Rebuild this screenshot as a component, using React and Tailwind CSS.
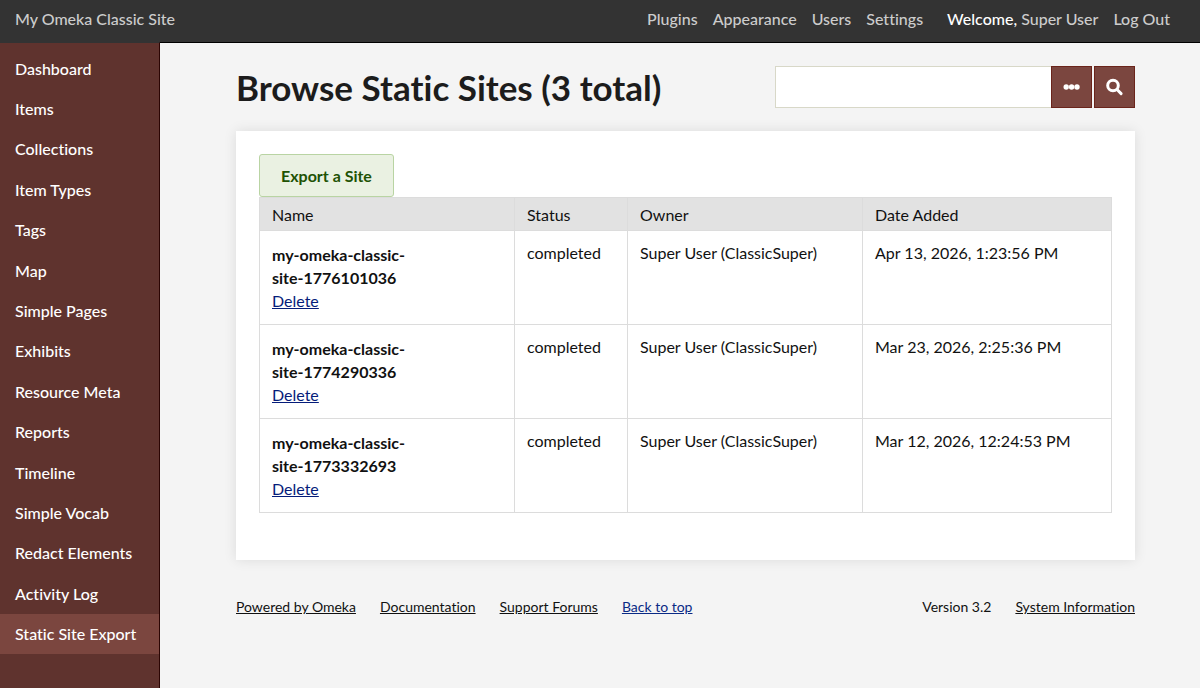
import { useState } from "react";

const adminLinks = ["Plugins", "Appearance", "Users", "Settings"];

const navLinks = [
  "Dashboard",
  "Items",
  "Collections",
  "Item Types",
  "Tags",
  "Map",
  "Simple Pages",
  "Exhibits",
  "Resource Meta",
  "Reports",
  "Timeline",
  "Simple Vocab",
  "Redact Elements",
  "Activity Log",
  "Static Site Export",
];

const sites = [
  { id: "1776101036", status: "completed", owner: "Super User (ClassicSuper)", added: "Apr 13, 2026, 1:23:56 PM" },
  { id: "1774290336", status: "completed", owner: "Super User (ClassicSuper)", added: "Mar 23, 2026, 2:25:36 PM" },
  { id: "1773332693", status: "completed", owner: "Super User (ClassicSuper)", added: "Mar 12, 2026, 12:24:53 PM" },
];

function Header() {
  return (
    <header className="flex items-center justify-between bg-[#333333] h-[42px] pl-[15px] pr-[30px] pb-[6px] text-[#cccccc] font-medium">
      <a href="#">My Omeka Classic Site</a>
      <div className="flex gap-6">
        <nav className="flex gap-[15px]">
          {adminLinks.map((link) => (
            <a key={link} href="#">{link}</a>
          ))}
        </nav>
        <div className="flex gap-[15px]">
          <span>
            <span className="text-white">Welcome,</span> <a href="#">Super User</a>
          </span>
          <a href="#">Log Out</a>
        </div>
      </div>
    </header>
  );
}

function Sidebar({ current }) {
  return (
    <nav className="w-40 shrink-0 bg-[#5f332e] border-t border-t-[#333333] border-r border-r-[#2b0503] pt-[5px] pb-[34px] text-white font-medium">
      <ul className="grid auto-rows-fr h-[606px]">
        {navLinks.map((link) => (
          <li key={link} className={link === current ? "bg-[#7b463f]" : ""}>
            <a href="#" className="flex items-center h-full pl-[15px]">{link}</a>
          </li>
        ))}
      </ul>
    </nav>
  );
}

function SearchForm() {
  const [query, setQuery] = useState("");

  return (
    <form className="flex w-[360px] h-[42px]" role="search" onSubmit={(e) => e.preventDefault()}>
      <input
        type="text"
        aria-label="Search"
        value={query}
        onChange={(e) => setQuery(e.target.value)}
        className="flex-1 min-w-0 bg-white border border-r-0 border-[#d8d8c8] px-3 outline-none"
      />
      <button type="button" aria-label="Advanced search" className="w-[41px] flex items-center justify-center bg-[#7b463f] border border-[#6b241b] text-white">
        <svg viewBox="0 0 18 6" className="w-[18px] h-[6px]" fill="currentColor">
          <circle cx="3.2" cy="3" r="2.7" />
          <circle cx="8.6" cy="3" r="2.7" />
          <circle cx="14" cy="3" r="2.7" />
        </svg>
      </button>
      <button type="submit" aria-label="Submit search" className="w-[41px] ml-[2px] flex items-center justify-center bg-[#7b463f] border border-[#6b241b] text-white">
        <svg viewBox="0 0 18 18" className="w-[18px] h-[18px]" fill="none" stroke="currentColor" strokeWidth="3" strokeLinecap="round">
          <circle cx="7" cy="7.5" r="5.3" />
          <path d="M11.3 11.8 15.1 15.6" />
        </svg>
      </button>
    </form>
  );
}

function SitesTable() {
  return (
    <table className="w-full table-fixed border-collapse text-left">
      <thead>
        <tr className="bg-[#e2e2e2]">
          <th className="w-[255px] border border-[#dcdcdc] px-3 h-[33px] font-normal">Name</th>
          <th className="w-[113px] border border-[#dcdcdc] px-3 font-normal">Status</th>
          <th className="w-[235px] border border-[#dcdcdc] px-3 font-normal">Owner</th>
          <th className="border border-[#dcdcdc] px-3 font-normal">Date Added</th>
        </tr>
      </thead>
      <tbody>
        {sites.map((site) => (
          <tr key={site.id} className="align-top">
            <td className="border border-[#dcdcdc] px-3 pt-3 pb-[11px]">
              <div className="font-bold">
                my-omeka-classic-
                <br />
                site-{site.id}
              </div>
              <a href="#" className="block leading-6 text-[#051c7a] underline">Delete</a>
            </td>
            <td className="border border-[#dcdcdc] px-3 pt-[10px]">{site.status}</td>
            <td className="border border-[#dcdcdc] px-3 pt-[10px]">{site.owner}</td>
            <td className="border border-[#dcdcdc] px-3 pt-[10px]">{site.added}</td>
          </tr>
        ))}
      </tbody>
    </table>
  );
}

function Footer() {
  return (
    <footer className="flex justify-between mt-[35px] text-sm leading-[23px]">
      <div className="flex gap-6">
        <a href="#" className="underline">Powered by Omeka</a>
        <a href="#" className="underline">Documentation</a>
        <a href="#" className="underline">Support Forums</a>
        <a href="#" className="underline text-[#0a2a85]">Back to top</a>
      </div>
      <div className="flex gap-6">
        <span>Version 3.2</span>
        <a href="#" className="underline">System Information</a>
      </div>
    </footer>
  );
}

export default function App() {
  return (
    <div className="min-h-screen flex flex-col bg-[#f4f4f4] text-[#111111] font-['Lato',sans-serif] text-base leading-[23px] [font-variant-ligatures:none]">
      <Header />
      <div className="flex flex-1">
        <Sidebar current="Static Site Export" />
        <main className="flex-1 min-w-0 border-t border-black pt-[23px] pl-[76px] pr-[65px]">
          <div className="flex items-center justify-between">
            <h1 className="text-[35px] leading-10 font-bold text-[#1c1c1c]">Browse Static Sites (3 total)</h1>
            <SearchForm />
          </div>

          <section className="bg-white mt-[23px] px-[23px] pt-[23px] pb-[47px] shadow-[0_0_12px_rgba(0,0,0,0.1)]">
            <button type="button" className="block h-[43px] px-[21px] rounded-[3px] border border-[#b9d4a3] bg-[#eaf1e2] text-[#215204] font-bold">
              Export a Site
            </button>
            <SitesTable />
          </section>

          <Footer />
        </main>
      </div>
    </div>
  );
}
